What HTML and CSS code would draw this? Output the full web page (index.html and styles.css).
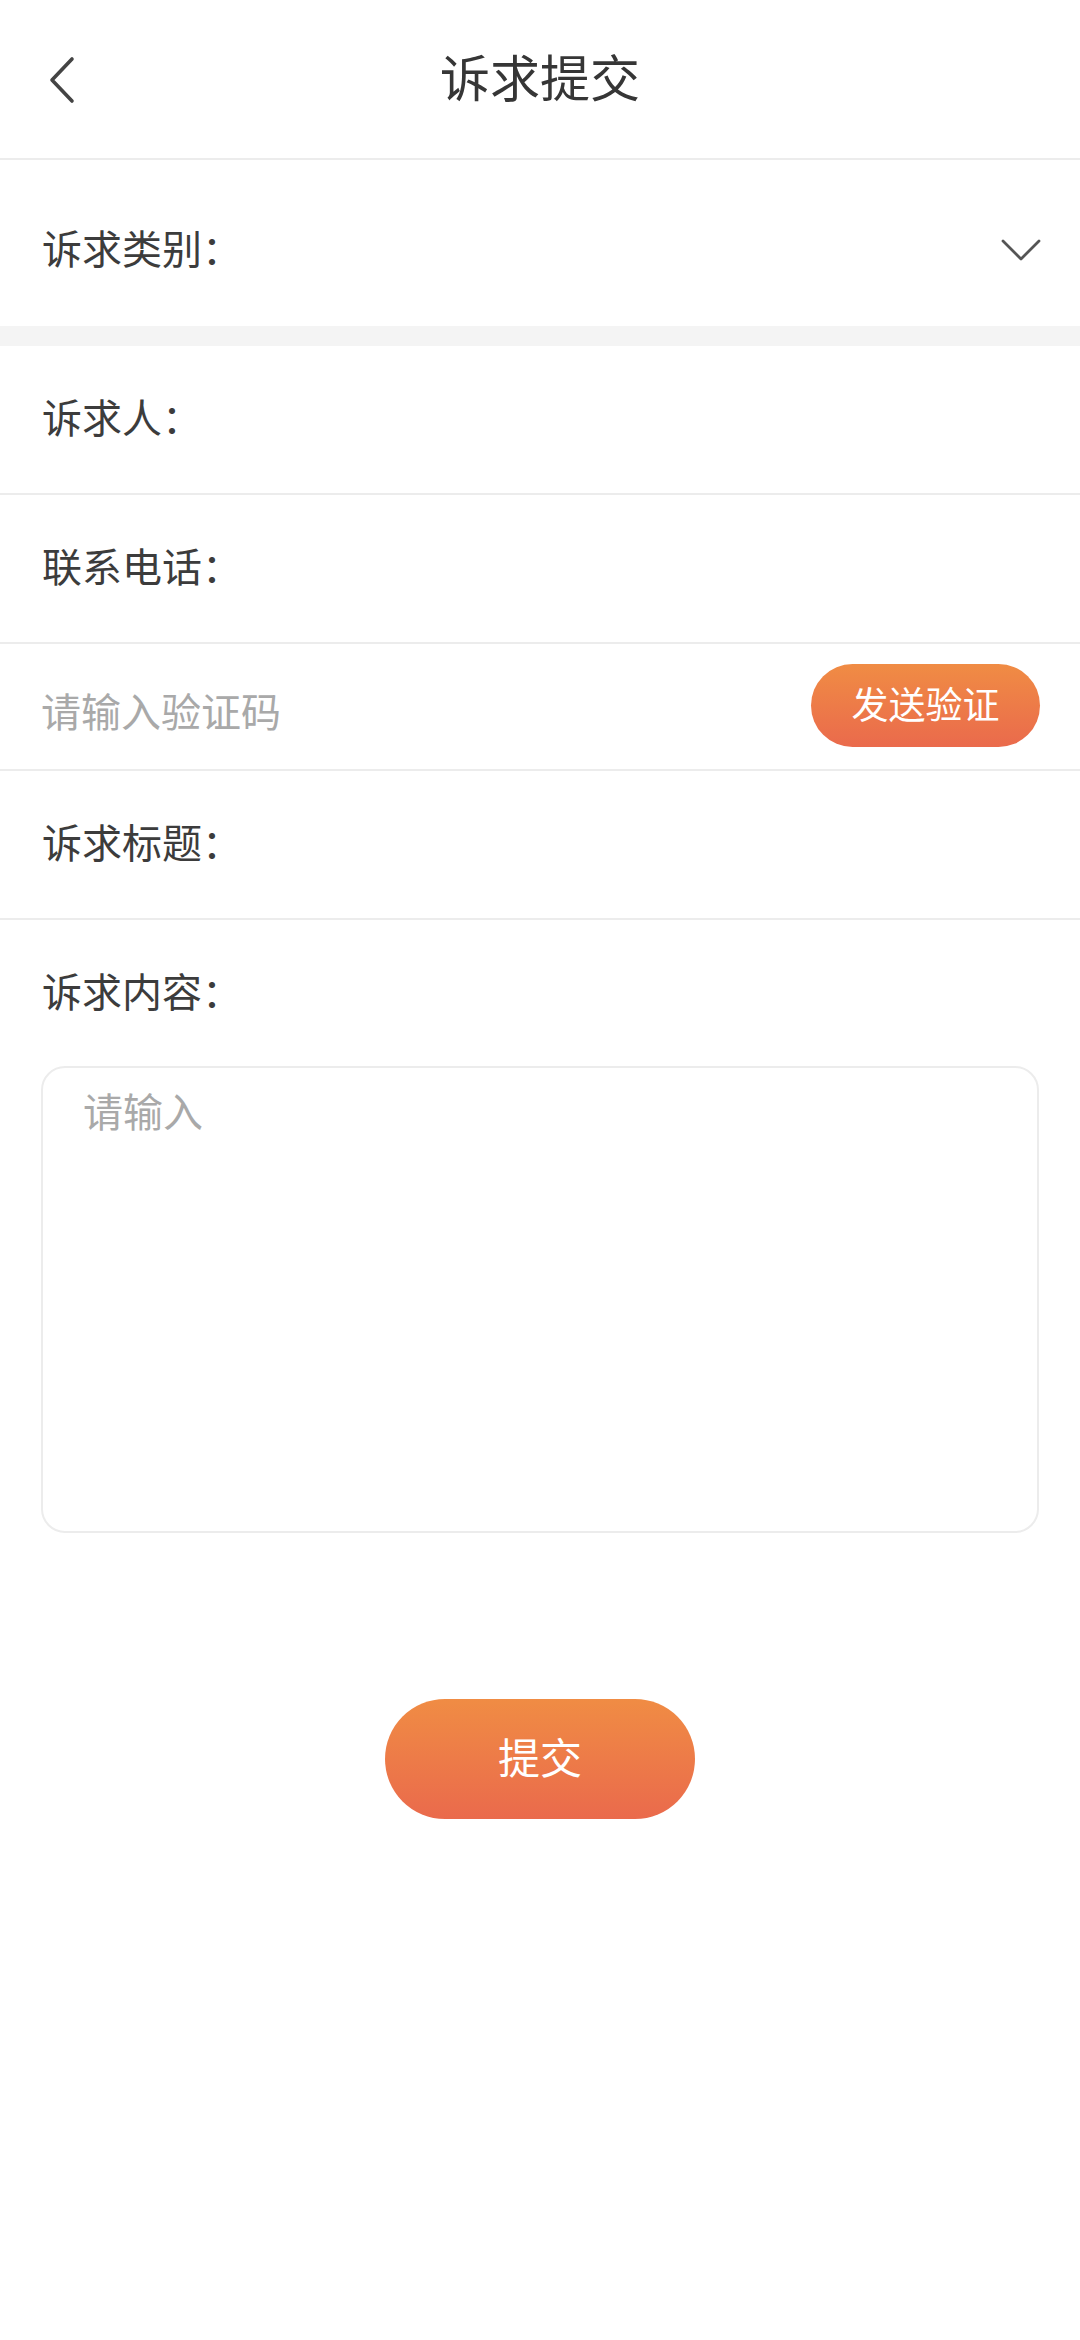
FILE: index.html
```html
<!DOCTYPE html>
<html lang="zh-CN">
<head>
<meta charset="utf-8">
<title>诉求提交</title>
<link rel="stylesheet" href="styles.css">
</head>
<body>
<div class="page">
  <header class="topbar">
    <div class="topbar-left">
      <svg class="back" width="30" height="48" viewBox="0 0 30 48" aria-hidden="true">
        <polyline points="25,3 5,24 25,45" fill="none" stroke="#444" stroke-width="3.6" stroke-linecap="round" stroke-linejoin="round"/>
      </svg>
    </div>
    <h1 class="title">诉求提交</h1>
    <div></div>
  </header>

  <div class="row row-select">
    <span class="label">诉求类别：</span>
    <svg class="down" width="40" height="24" viewBox="0 0 40 24" aria-hidden="true">
      <polyline points="2,3 20,21 38,3" fill="none" stroke="#555" stroke-width="2.8" stroke-linecap="round" stroke-linejoin="round"/>
    </svg>
  </div>

  <div class="band"></div>

  <div class="row">
    <span class="label">诉求人：</span>
  </div>
  <div class="row">
    <span class="label">联系电话：</span>
  </div>
  <div class="row row-code">
    <span class="placeholder">请输入验证码</span>
    <button class="send">发送验证</button>
  </div>
  <div class="row">
    <span class="label">诉求标题：</span>
  </div>

  <div class="content">
    <div class="label content-label">诉求内容：</div>
    <div class="textarea">
      <span class="placeholder">请输入</span>
    </div>
  </div>

  <div class="submit-wrap">
    <button class="submit">提交</button>
  </div>
</div>
</body>
</html>
```

FILE: styles.css
```css
html, body {
  margin: 0;
  padding: 0;
  background: #ffffff;
}

body {
  font-family: "Noto Sans CJK SC", "Noto Sans", sans-serif;
  color: #3c3c3c;
}

.page {
  width: 1080px;
  min-height: 2340px;
  background: #fff;
}

.topbar {
  height: 158px;
  display: grid;
  grid-template-columns: 1fr auto 1fr;
  align-items: center;
  border-bottom: 2px solid #ececec;
  box-sizing: content-box;
}

.topbar-left {
  padding-left: 47px;
  display: flex;
  align-items: center;
}

.back {
  display: block;
  margin-top: 2px;
}

.title {
  margin: 0 0 8px 0;
  font-size: 50px;
  font-weight: 400;
  line-height: 60px;
  color: #363636;
  letter-spacing: 0;
}

.row {
  height: 147px;
  display: flex;
  align-items: center;
  padding: 0 40px 0 42px;
  border-bottom: 2px solid #ececec;
}

.row > .label {
  margin-bottom: 8px;
}

.row-select {
  height: 166px;
  padding-top: 14px;
  box-sizing: border-box;
  justify-content: space-between;
  border-bottom: none;
}

.row-select > .label {
  margin-bottom: 6px;
}

.down {
  display: block;
  margin-right: -1px;
}

.band {
  height: 20px;
  background: #f4f4f4;
}

.label {
  font-size: 40px;
  line-height: 56px;
  color: #3c3c3c;
}

.placeholder {
  font-size: 40px;
  line-height: 56px;
  color: #a9a9a9;
}

.row-code {
  height: 125px;
  justify-content: space-between;
  padding-left: 41px;
}

.row-code .placeholder {
  margin-top: 7px;
}

.send {
  width: 229px;
  height: 83px;
  border: none;
  border-radius: 42px;
  background: linear-gradient(to bottom, #f08c44, #ea6a4c);
  color: #fff;
  font-family: inherit;
  font-size: 37px;
  line-height: 50px;
  padding: 0 0 6px 0;
  margin-top: -2px;
}

.content {
  padding: 42px 41px 0 41px;
}

.content-label {
  padding-left: 1px;
}

.textarea {
  margin-top: 48px;
  height: 467px;
  box-sizing: border-box;
  border: 2px solid #ececec;
  border-radius: 24px;
  padding: 14px 40px;
}

.submit-wrap {
  display: flex;
  justify-content: center;
  padding-top: 166px;
}

.submit {
  width: 310px;
  height: 120px;
  border: none;
  border-radius: 60px;
  background: linear-gradient(to bottom, #f08c44, #ea6a4c);
  color: #fff;
  font-family: inherit;
  font-size: 42px;
  line-height: 56px;
  padding: 0 0 6px 0;
}
```
